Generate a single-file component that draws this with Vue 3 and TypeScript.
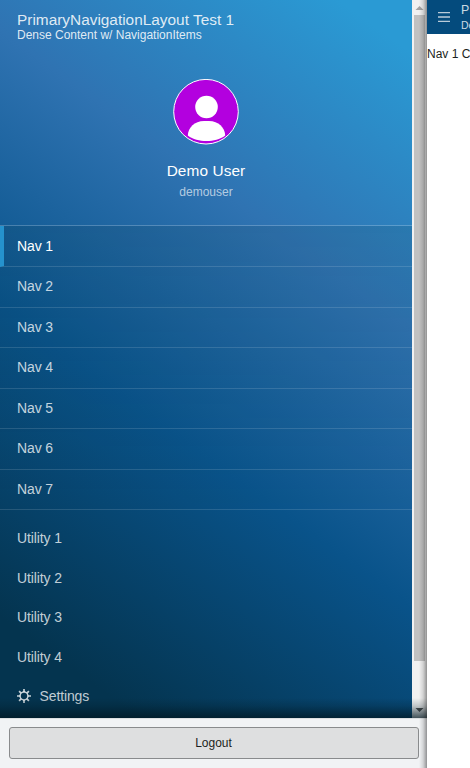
<script setup lang="ts">
const navItems: string[] = ['Nav 1', 'Nav 2', 'Nav 3', 'Nav 4', 'Nav 5', 'Nav 6', 'Nav 7']
const utilities: string[] = ['Utility 1', 'Utility 2', 'Utility 3', 'Utility 4']
</script>

<template>
  <div class="layout">
    <aside class="drawer">
      <div class="scroller">
        <div class="menu">
          <header class="brand">
            <div class="title">PrimaryNavigationLayout Test 1</div>
            <div class="subtitle">Dense Content w/ NavigationItems</div>
          </header>
          <section class="user">
            <svg class="avatar" viewBox="0 0 66 66">
              <circle cx="33" cy="32.7" r="32.3" fill="#b300df" stroke="#fff" stroke-width="1" />
              <circle cx="33.5" cy="28" r="11.3" fill="#fff" />
              <path d="M14.8 56.5C15.2 48.500 21.500 42 31 42H36C45.500 42 51.800 48.500 52.200 56.500C47 60.500 40.500 62 33.500 62S20 60.500 14.800 56.500Z" fill="#fff" />
            </svg>
            <div class="name">Demo User</div>
            <div class="login">demouser</div>
          </section>
          <nav class="items">
            <a v-for="(item, i) in navItems" :key="item" class="item" :class="{ active: i === 0 }">{{ item }}</a>
          </nav>
          <div class="utilities">
            <a v-for="item in utilities" :key="item" class="utility">{{ item }}</a>
            <a class="utility">
              <svg class="gear" viewBox="0 0 14 14" fill="none" stroke="currentColor">
                <circle cx="7" cy="7" r="3.9" stroke-width="1.5" />
                <path d="M7 0v3M7 11v3M0 7h3M11 7h3M2.100 2.100l2 2M9.900 9.900l2 2M2.100 11.900l2-2M9.900 4.100l2-2" stroke-width="1.7" />
              </svg>
              Settings
            </a>
          </div>
        </div>
        <div class="scrollbar">
          <svg class="arrow" viewBox="0 0 15 15"><path d="M3.500 10L7.500 6L11.500 10Z" fill="#a3a3a3" /></svg>
          <div class="track"><div class="thumb"></div></div>
          <svg class="arrow" viewBox="0 0 15 15"><path d="M3.500 5L7.500 9L11.500 5Z" fill="#505050" /></svg>
        </div>
        <div class="fade"></div>
      </div>
      <footer class="footer">
        <button class="logout" type="button">Logout</button>
      </footer>
      <div class="edge"></div>
    </aside>
    <main class="content">
      <header class="topbar">
        <svg class="burger" viewBox="0 0 12 10"><path d="M0 .5h12M0 5h12M0 9.500h12" stroke="#b9cbd9" stroke-width="1.300" /></svg>
        <div class="titles">
          <div class="top-title">PrimaryNavigationLayout Test 1</div>
          <div class="top-sub">Dense Content w/ NavigationItems</div>
        </div>
      </header>
      <div class="page">Nav 1 Content</div>
    </main>
  </div>
</template>

<style>
body {
  background: #fff;
  overflow: hidden;
}
</style>

<style scoped>
.layout {
  display: flex;
  width: 100vw;
  height: 100vh;
  overflow: hidden;
  font-family: "Liberation Sans", Arial, sans-serif;
}
.drawer {
  position: relative;
  display: flex;
  flex-direction: column;
  flex: none;
  width: 427px;
}
.scroller {
  position: relative;
  display: flex;
  height: 718px;
  overflow: hidden;
}
.menu {
  width: 412px;
  height: 766px;
  color: #fff;
  background: linear-gradient(36deg, #04344f 14%, #09538a 43%, #2f73b2 69%, #2a9ad4 95%);
}
.brand {
  height: 79px;
  padding: 11px 0 0 17px;
  box-sizing: border-box;
  color: rgba(255, 255, 255, .86);
}
.title {
  font-size: 15.4px;
  line-height: 18px;
}
.subtitle {
  font-size: 12px;
  line-height: 12px;
}
.user {
  display: flex;
  flex-direction: column;
  align-items: center;
  height: 146.400px;
}
.avatar {
  width: 66px;
  height: 66px;
}
.name {
  margin-top: 17px;
  font-size: 15.4px;
  line-height: 18px;
  letter-spacing: .1px;
}
.login {
  margin-top: 5px;
  font-size: 12px;
  line-height: 14px;
  color: rgba(255, 255, 255, .65);
}
.items {
  border-top: 1px solid rgba(255, 255, 255, .22);
  background: linear-gradient(to bottom, rgba(0, 20, 0, .08), transparent);
}
.item {
  display: flex;
  align-items: center;
  box-sizing: border-box;
  height: 40.570px;
  padding: 0 0 1.200px 17px;
  border-bottom: 1px solid rgba(255, 255, 255, .13);
  font-size: 14px;
  line-height: 16px;
  letter-spacing: -.12px;
  color: rgba(255, 255, 255, .77);
}
.active {
  padding-left: 13px;
  border-left: 4px solid #2592cd;
  color: #fff;
}
.utilities {
  padding-top: 8.300px;
}
.utility {
  display: flex;
  align-items: center;
  gap: 8.500px;
  height: 39.500px;
  padding-left: 17px;
  font-size: 14px;
  line-height: 16px;
  letter-spacing: -.12px;
  color: rgba(255, 255, 255, .77);
}
.gear {
  width: 14px;
  height: 14px;
}
.scrollbar {
  display: flex;
  flex-direction: column;
  width: 15px;
  background: #f1f1f1;
}
.arrow {
  width: 15px;
  height: 15px;
}
.track {
  flex: 1;
}
.thumb {
  width: 11px;
  height: 646px;
  margin-left: 2px;
  background: #c1c1c1;
}
.fade {
  position: absolute;
  inset: auto 0 0;
  height: 20px;
  background: linear-gradient(to bottom, transparent, rgba(0, 22, 32, .2) 40%, rgba(0, 22, 32, .72));
}
.footer {
  flex: 1;
  box-sizing: border-box;
  padding: 8px 8px 9px 9px;
  border-top: 1px solid #dcdfe1;
  background: #f1f3f5;
}
.logout {
  display: block;
  width: 100%;
  height: 32px;
  padding: 0 1px 0 0;
  border: 1px solid #898b8d;
  border-radius: 3px;
  background: #dedfe0;
  color: #1c1f21;
  font: 12px "Liberation Sans", Arial, sans-serif;
}
.edge {
  position: absolute;
  inset: 0 0 0 auto;
  width: 8px;
  background: linear-gradient(to right, transparent, rgba(0, 0, 0, .12) 50%, rgba(0, 0, 0, .4));
}
.content {
  flex: 1;
  min-width: 0;
  overflow: hidden;
  white-space: nowrap;
}
.topbar {
  display: flex;
  height: 34px;
  padding-left: 11px;
  background: #044b7d;
  color: rgba(255, 255, 255, .8);
}
.burger {
  flex: none;
  width: 12px;
  height: 10px;
  margin-top: 12px;
}
.titles {
  padding: 3px 0 0 11px;
}
.top-title {
  font-size: 12.400px;
  letter-spacing: .5px;
  line-height: 15px;
}
.top-sub {
  font-size: 10.500px;
  line-height: 15px;
}
.page {
  padding-top: 13px;
  font-size: 12px;
  line-height: 14px;
  color: #1c1f21;
}
</style>
